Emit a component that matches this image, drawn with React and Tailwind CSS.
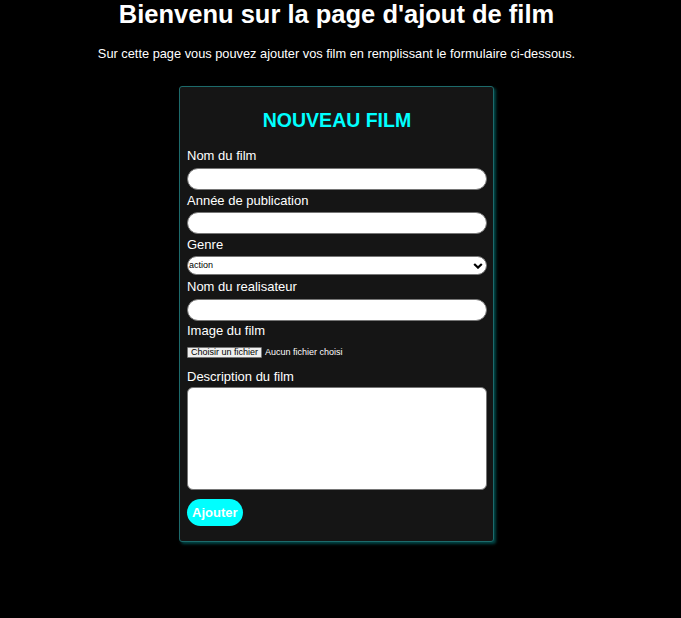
import React from "react";

function Label({ children, className = "" }) {
  return (
    <label className={`block text-[13px] leading-[15px] text-white ${className}`}>
      {children}
    </label>
  );
}

export default function App() {
  const inputCls =
    "block w-[300px] h-[22px] rounded-full bg-white border border-[#767676] outline-none px-2 text-[12px] text-black";

  return (
    <div
      className="min-h-[618px] bg-black pr-[8px]"
      style={{ fontFamily: '"Liberation Sans", Arial, sans-serif' }}
    >
      <h1 className="text-center text-[25.5px] leading-[29px] font-bold text-white">
        Bienvenu sur la page d'ajout de film
      </h1>
      <p className="mt-[17px] text-center text-[12.8px] leading-[15px] text-white">
        Sur cette page vous pouvez ajouter vos film en remplissant le formulaire ci-dessous.
      </p>

      <div className="flex justify-center mt-[25px]">
        <form className="w-[315px] bg-[#151515] border border-[#1d6a6b] rounded-[3px] shadow-[2px_2px_3px_rgba(0,200,200,0.35)] pl-[7px] pr-[6px] pt-[22px] pb-[15px]">
          <h2 className="text-center text-[19.5px] leading-[23px] font-bold text-[#00ffff]">
            NOUVEAU FILM
          </h2>

          <Label className="mt-[16px]">Nom du film</Label>
          <input className={`${inputCls} mt-[5px]`} />

          <Label className="mt-[3px]">Année de publication</Label>
          <input className={`${inputCls} mt-[4px]`} />

          <Label className="mt-[3px]">Genre</Label>
          <div className="relative w-[300px] mt-[4px]">
            <select className="block w-[300px] h-[19px] appearance-none rounded-full bg-white border border-[#767676] pl-[1px] text-[9px] text-black outline-none">
              <option>action</option>
            </select>
            <svg
              className="absolute right-[4px] top-[7px] pointer-events-none"
              width="10"
              height="6"
              viewBox="0 0 10 6"
            >
              <path d="M1.2 1 L5 4.6 L8.8 1" fill="none" stroke="black" strokeWidth="2.2" />
            </svg>
          </div>

          <Label className="mt-[4px]">Nom du realisateur</Label>
          <input className={`${inputCls} mt-[5px]`} />

          <Label className="mt-[2px]">Image du film</Label>
          <div className="mt-[9px] flex items-center h-[11px]">
            <span className="h-[11px] px-[3px] bg-[#efefef] border border-[#767676] rounded-[1px] text-[9px] leading-[9px] text-black">
              Choisir un fichier
            </span>
            <span className="ml-[3px] text-[9px] leading-[11px] text-white">
              Aucun fichier choisi
            </span>
          </div>

          <Label className="mt-[11px]">Description du film</Label>
          <textarea className="block mt-[3px] w-[300px] h-[103px] rounded-[6px] bg-white border border-[#767676] outline-none resize-none" />

          <button
            type="button"
            className="block mt-[9px] h-[27px] px-[5px] rounded-full bg-[#00ffff] text-white text-[13px] font-bold"
          >
            Ajouter
          </button>
        </form>
      </div>
    </div>
  );
}
